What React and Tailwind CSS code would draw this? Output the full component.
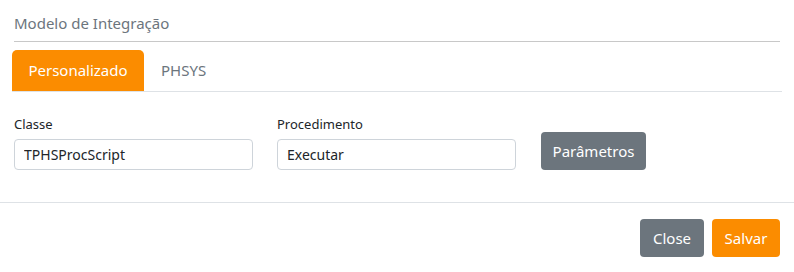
export default function App() {
    return (
        <div className="w-[794px] h-[272px] bg-white text-[#212529] font-['Noto_Sans',sans-serif] overflow-hidden">
            <div className="pt-[14px] px-[14px]">
                <h5 className="text-[15px] leading-[18px] text-[#6c757d] pb-[9px] border-b border-[#c8c8c8]">Modelo de Integração</h5>
            </div>

            <div className="mx-3 mt-[8px] flex border-b border-[#dee2e6]">
                <button className="h-[41px] w-[132px] rounded-t-[5px] bg-[#fb8c00] text-white text-[15px]">Personalizado</button>
                <button className="h-[41px] px-[17px] text-[#6c757d] text-[15px]">PHSYS</button>
            </div>

            <div className="px-[14px] pt-[24px] flex items-end gap-[24px]">
                <div className="w-[239px]">
                    <label className="block text-[13px] leading-[16px] mb-[7px]">Classe</label>
                    <input
                        className="w-full h-[31px] px-[9px] text-[14px] border border-[#ced4da] rounded-[4px] outline-none"
                        defaultValue="TPHSProcScript"
                    />
                </div>
                <div className="w-[239px]">
                    <label className="block text-[13px] leading-[16px] mb-[7px]">Procedimento</label>
                    <input
                        className="w-full h-[31px] px-[9px] text-[14px] border border-[#ced4da] rounded-[4px] outline-none"
                        defaultValue="Executar"
                    />
                </div>
                <button className="ml-[1px] h-[38px] w-[105px] rounded-[4px] bg-[#6c757d] text-white text-[15px]">Parâmetros</button>
            </div>

            <div className="mt-[32px] border-t border-[#dee2e6] flex justify-end gap-2 pr-[14px] pt-[16px]">
                <button className="h-[38px] w-[64px] rounded-[4px] bg-[#6c757d] text-white text-[15px]">Close</button>
                <button className="h-[38px] w-[68px] rounded-[4px] bg-[#fb8c00] text-white text-[15px]">Salvar</button>
            </div>
        </div>
    );
}
